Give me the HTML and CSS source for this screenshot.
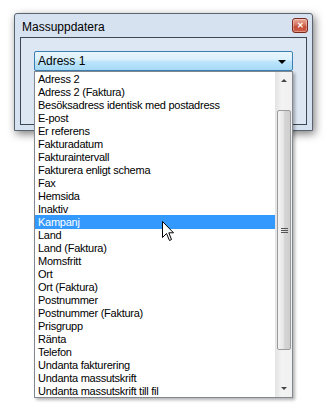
FILE: index.html
```html
<!DOCTYPE html>
<html lang="sv">
<head>
  <meta charset="UTF-8">
  <title>Massuppdatera</title>
  <link rel="stylesheet" href="styles.css">
</head>
<body>

<div class="window">
  <div class="titlebar">
    <span class="title">Massuppdatera</span>
    <div class="close">&#x2715;</div>
  </div>
  <div class="client">
    <div class="combo">
      <div class="combo-box">
        <span>Adress 1</span>
        <span class="combo-arrow"></span>
      </div>

      <div class="dropdown">
        <ul class="options">
          <li>Adress 2</li>
          <li>Adress 2 (Faktura)</li>
          <li>Besöksadress identisk med postadress</li>
          <li>E-post</li>
          <li>Er referens</li>
          <li>Fakturadatum</li>
          <li>Fakturaintervall</li>
          <li>Fakturera enligt schema</li>
          <li>Fax</li>
          <li>Hemsida</li>
          <li>Inaktiv</li>
          <li class="selected">Kampanj</li>
          <li>Land</li>
          <li>Land (Faktura)</li>
          <li>Momsfritt</li>
          <li>Ort</li>
          <li>Ort (Faktura)</li>
          <li>Postnummer</li>
          <li>Postnummer (Faktura)</li>
          <li>Prisgrupp</li>
          <li>Ränta</li>
          <li>Telefon</li>
          <li>Undanta fakturering</li>
          <li>Undanta massutskrift</li>
          <li>Undanta massutskrift till fil</li>
        </ul>
        <div class="scrollbar">
          <div class="sb-btn"><span class="sb-up"></span></div>
          <div class="sb-track">
            <div class="sb-thumb"><span class="grip"></span></div>
          </div>
          <div class="sb-btn"><span class="sb-down"></span></div>
        </div>
      </div>
    </div>
  </div>
</div>

<!-- mouse pointer over the list -->
<svg class="cursor" width="13" height="21" viewBox="0 0 13 21">
  <path d="M0.5 0.5 L0.5 16.5 L4.5 12.5 L7.5 19.5 L9.5 18.5 L6.8 11.8 L11.5 11.8 Z" fill="#fff" stroke="#000" stroke-width="1"/>
</svg>

</body>
</html>
```

FILE: styles.css
```css
body {
  margin: 0;
  background: #fff;
  font-family: 'Liberation Sans', Arial, sans-serif;
  color: #000;
  position: relative;
  width: 333px;
  height: 408px;
  overflow: hidden;
}

.window {
  margin: 13px 0 0 14px;
  width: 287px;
  border: 1px solid #5a6470;
  border-radius: 3px 3px 0 0;
  background: #d7e2f0;
  box-shadow: 2px 3px 9px rgba(0, 0, 0, 0.5);
  padding: 0 5px 5px;
}

.titlebar {
  height: 23px;
  display: flex;
  align-items: center;
  justify-content: space-between;
}

.title {
  font-size: 12px;
  padding: 2px 0 0 2px;
}

.close {
  width: 14px;
  height: 13px;
  margin: 0 -1px 0 0;
  border: 1px solid #7a2a1e;
  border-radius: 3px;
  background: linear-gradient(#eeaa9a, #d06a55 50%, #c24a33 51%, #d0604a);
  color: #fff;
  font-size: 8px;
  font-weight: bold;
  line-height: 13px;
  text-align: center;
  box-shadow: inset 0 0 0 1px rgba(255, 255, 255, 0.35);
}

.client {
  height: 73px;
  border: 1px solid #3d4754;
  background: #dde6f3;
  padding: 13px 0 0 13px;
}

.combo {
  position: relative;
  width: 259px;
}

.combo-box {
  height: 18px;
  border: 1px solid #3c7fb1;
  border-radius: 2px;
  background: linear-gradient(#eaf6fd, #d9f0fc 45%, #bee6fd 50%, #a7d9f5);
  display: flex;
  align-items: center;
  justify-content: space-between;
  padding: 0 6px 0 3px;
  font-size: 12px;
}

.combo-arrow {
  width: 0;
  height: 0;
  border-left: 4px solid transparent;
  border-right: 4px solid transparent;
  border-top: 4px solid #000;
  margin-top: 1px;
}

/* the open list lies over the dialog */
.dropdown {
  position: absolute;
  top: 20px;
  left: 0;
  width: 257px;
  height: 325px;
  border: 1px solid #828790;
  background: #fff;
  display: flex;
  box-shadow: 2px 2px 3px rgba(0, 0, 0, 0.3);
}

.options {
  list-style: none;
  margin: 0;
  padding: 0;
  flex: 1;
}

.options li {
  height: 13px;
  line-height: 13px;
  padding: 1px 0 0 3px;
  margin-bottom: -1px;
  font-size: 11px;
  letter-spacing: -0.25px;
  white-space: nowrap;
}

.options li.selected {
  background: #3399ff;
  color: #fff;
}

.scrollbar {
  width: 17px;
  display: flex;
  flex-direction: column;
  background: linear-gradient(90deg, #e3e3e3, #f3f3f3 40%, #f0f0f0);
}

.sb-btn {
  height: 17px;
  display: flex;
  align-items: center;
  justify-content: center;
}

.sb-up,
.sb-down {
  width: 0;
  height: 0;
  border-left: 3px solid transparent;
  border-right: 3px solid transparent;
}

.sb-up {
  border-bottom: 3px solid #444;
}

.sb-down {
  border-top: 3px solid #444;
}

.sb-track {
  flex: 1;
  padding-top: 21px;
}

.sb-thumb {
  height: 238px;
  margin: 0 1px 0 2px;
  border: 1px solid #9b9b9b;
  border-radius: 2px;
  background: linear-gradient(90deg, #f4f4f4, #e6e6e6 45%, #d5d5d5 55%, #cfcfcf);
  display: flex;
  align-items: center;
  justify-content: center;
}

.grip {
  width: 7px;
  height: 5px;
  border-top: 1px solid #555;
  border-bottom: 1px solid #555;
  box-sizing: border-box;
  position: relative;
}

.grip::after {
  content: '';
  position: absolute;
  left: 0;
  right: 0;
  top: 1px;
  border-top: 1px solid #555;
}

.cursor {
  position: absolute;
  left: 162px;
  top: 221px;
}
```
